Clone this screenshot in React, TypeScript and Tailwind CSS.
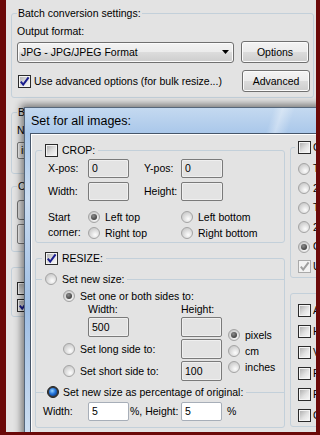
import clsx from 'clsx';
import type { ReactNode } from 'react';

function Check({ checked = false, disabled = false }: { checked?: boolean; disabled?: boolean }) {
  return (
    <span
      className={clsx(
        'flex h-[13px] w-[13px] shrink-0 items-center justify-center border',
        disabled
          ? 'border-[#a9a9a9] bg-[#f3f3f3]'
          : 'border-[#2a2a2a] bg-[linear-gradient(135deg,#a8a8a8_0%,#e2e2e2_55%,#fbfbfb_100%)] shadow-[inset_0_0_0_1px_#f4f4f4]',
      )}
    >
      {checked && (
        <svg width="11" height="11" viewBox="0 0 11 11">
          <path
            d="M1.8 5.6 L4.2 8.6 L9.6 1.4"
            fill="none"
            stroke={disabled ? '#a0a0a0' : '#1b1e8e'}
            strokeWidth="2"
          />
        </svg>
      )}
    </span>
  );
}

function Radio({ checked = false, blue = false }: { checked?: boolean; blue?: boolean }) {
  return (
    <span
      className={clsx(
        'flex h-[12px] w-[12px] shrink-0 items-center justify-center rounded-full border',
        blue
          ? 'border-[#262626] bg-[#3a3a3a]'
          : 'border-[#a4a4a4] bg-[radial-gradient(circle_at_62%_68%,#fdfdfd_0%,#dfdfdf_45%,#bcbcbc_100%)]',
      )}
    >
      {checked &&
        (blue ? (
          <span className="h-[8px] w-[8px] rounded-full bg-[radial-gradient(circle_at_40%_35%,#9ad6ff_0%,#2274dc_45%,#06245e_100%)]" />
        ) : (
          <span className="h-[6px] w-[6px] rounded-full bg-[radial-gradient(circle_at_40%_35%,#8c8c8c,#262626)]" />
        ))}
    </span>
  );
}

function RadioLabel({
  checked,
  blue,
  children,
}: {
  checked?: boolean;
  blue?: boolean;
  children: ReactNode;
}) {
  return (
    <span className="flex items-center gap-[5px] whitespace-nowrap">
      <Radio checked={checked} blue={blue} />
      {children}
    </span>
  );
}

function Field({
  value = '',
  white = false,
  className,
}: {
  value?: string;
  white?: boolean;
  className: string;
}) {
  return (
    <span
      className={clsx(
        'flex shrink-0 items-center rounded-[2px] border pl-[3px]',
        white
          ? 'border-[#a7aeb8] bg-white'
          : 'border-[#7a7a7a] bg-[#e3e3e3] shadow-[inset_0_0_0_1px_#efefef]',
        className,
      )}
    >
      {value}
    </span>
  );
}

function WinButton({ children }: { children: ReactNode }) {
  return (
    <button
      type="button"
      className="h-[22px] w-[68px] shrink-0 rounded-[3px] border border-[#707070] bg-[linear-gradient(#f3f3f3_0%,#ebebeb_50%,#dcdcdc_50%,#cdcdcd_100%)] text-center shadow-[inset_0_0_0_1px_#fbfbfb]"
    >
      {children}
    </button>
  );
}

function BatchSettings() {
  return (
    <fieldset className="ml-[5px] mr-[2px] mt-[6px] min-w-0 rounded-[3px] border border-[#c3d0da] pb-[5px] pl-[5px] pr-[3px]">
      <legend className="px-[1px]">Batch conversion settings:</legend>
      <div className="mt-[3px]">Output format:</div>
      <div className="mt-[2px] flex h-[22px] items-center gap-[7px]">
        <div className="flex h-[21px] w-[217px] items-center justify-between rounded-[3px] border border-[#707070] bg-[linear-gradient(#f3f3f3_0%,#ebebeb_50%,#dcdcdc_50%,#cdcdcd_100%)] pl-[3px] pr-[4px] shadow-[inset_0_0_0_1px_#fbfbfb]">
          <span>JPG - JPG/JPEG Format</span>
          <svg width="7" height="4" viewBox="0 0 7 4">
            <polygon points="0,0 7,0 3.5,4" fill="#000" />
          </svg>
        </div>
        <WinButton>Options</WinButton>
      </div>
      <div className="mt-[7px] flex h-[22px] items-center">
        <span className="ml-[1px]">
          <Check checked />
        </span>
        <span className="ml-[3px] whitespace-nowrap">Use advanced options (for bulk resize...)</span>
        <span className="ml-auto">
          <WinButton>Advanced</WinButton>
        </span>
      </div>
    </fieldset>
  );
}

function BackGroups() {
  return (
    <div className="ml-[5px] flex w-[150px] flex-col">
      <fieldset className="mt-[7px] min-w-0 rounded-[3px] border border-[#c3d0da] pb-[14px] pl-[5px]">
        <legend className="px-[1px]">Batch rename</legend>
        <div className="mt-[3px]">Name pattern:</div>
        <Field value="image###" className="mt-[4px] h-[17px] w-[120px]" />
      </fieldset>
      <fieldset className="mt-[5px] min-w-0 rounded-[3px] border border-[#c3d0da] pb-[7px] pl-[5px]">
        <legend className="px-[1px]">Output folder:</legend>
        <div className="mt-[6px] h-[20px] w-[120px] rounded-[3px] border border-[#707070] bg-[#dcdcdc]" />
        <Field className="mt-[4px] h-[20px] w-[120px]" />
      </fieldset>
      <fieldset className="mt-[15px] min-w-0 rounded-[3px] border border-[#c3d0da] pb-[4px] pl-[5px] pt-[14px]">
        <div className="flex h-[13px] items-center gap-[4px]">
          <Check /> Overwrite
        </div>
        <div className="mt-[4px] flex h-[13px] items-center gap-[4px]">
          <Check checked /> Open folder
        </div>
      </fieldset>
    </div>
  );
}

function CropGroup() {
  return (
    <fieldset className="min-w-0 rounded-[3px] border border-[#c3d0da] pb-[1px] pl-[12px]">
      <legend className="-ml-[6px] px-[3px]">
        <span className="flex h-[14px] items-center gap-[4px]">
          <Check /> CROP:
        </span>
      </legend>
      <div className="mt-[2px] flex h-[19px] items-center whitespace-nowrap">
        <span className="w-[40px]">X-pos:</span>
        <Field value="0" className="h-[19px] w-[41px]" />
        <span className="ml-[15px] w-[37px]">Y-pos:</span>
        <Field value="0" className="h-[19px] w-[42px]" />
      </div>
      <div className="mt-[4px] flex h-[19px] items-center whitespace-nowrap">
        <span className="w-[40px]">Width:</span>
        <Field className="h-[19px] w-[41px]" />
        <span className="ml-[15px] w-[37px]">Height:</span>
        <Field className="h-[19px] w-[42px]" />
      </div>
      <div className="mt-[8px] flex">
        <div className="w-[40px] pt-[1px]">
          <div>Start</div>
          <div>corner:</div>
        </div>
        <div className="grid grid-cols-[93px_auto] grid-rows-[16px_16px] items-center">
          <RadioLabel checked>Left top</RadioLabel>
          <RadioLabel>Left bottom</RadioLabel>
          <RadioLabel>Right top</RadioLabel>
          <RadioLabel>Right bottom</RadioLabel>
        </div>
      </div>
    </fieldset>
  );
}

function ResizeGroup() {
  return (
    <fieldset className="mt-[8px] min-w-0 rounded-[3px] border border-[#c3d0da] pb-[6px]">
      <legend className="ml-[6px] px-[3px]">
        <span className="flex h-[14px] items-center gap-[4px]">
          <Check checked /> RESIZE:
        </span>
      </legend>

      <fieldset className="mt-[7px] min-w-0 border-t border-[#c3d0da]">
        <legend className="ml-[6px] px-[3px]">
          <span className="flex h-[14px] items-center">
            <RadioLabel>Set new size:</RadioLabel>
          </span>
        </legend>
        <div className="pl-[27px]">
          <div className="mt-[3px] flex h-[14px] items-center">
            <RadioLabel checked>Set one or both sides to:</RadioLabel>
          </div>
          <div className="flex h-[12px] items-center leading-[12px]">
            <span className="ml-[25px] w-[93px]">Width:</span>
            <span>Height:</span>
          </div>
          <div className="mt-[2px] flex">
            <div className="flex w-[118px] flex-col gap-[2px]">
              <div className="flex h-[20px] items-center pl-[25px]">
                <Field value="500" className="h-[20px] w-[41px]" />
              </div>
              <div className="flex h-[20px] items-center">
                <RadioLabel>Set long side to:</RadioLabel>
              </div>
              <div className="flex h-[20px] items-center">
                <RadioLabel>Set short side to:</RadioLabel>
              </div>
            </div>
            <div className="flex w-[47px] flex-col gap-[2px]">
              <Field className="h-[20px] w-[41px]" />
              <Field className="h-[20px] w-[41px]" />
              <Field value="100" className="h-[20px] w-[41px]" />
            </div>
            <div className="mt-[10px] flex flex-col">
              <div className="flex h-[16px] items-center">
                <RadioLabel checked>pixels</RadioLabel>
              </div>
              <div className="flex h-[16px] items-center">
                <RadioLabel>cm</RadioLabel>
              </div>
              <div className="flex h-[16px] items-center">
                <RadioLabel>inches</RadioLabel>
              </div>
            </div>
          </div>
        </div>
      </fieldset>

      <fieldset className="mt-[4px] min-w-0 border-t border-[#c3d0da]">
        <legend className="ml-[8px] px-[3px]">
          <span className="flex h-[14px] items-center gap-[4px] whitespace-nowrap">
            <Radio checked blue />
            Set new size as percentage of original:
          </span>
        </legend>
        <div className="mt-[3px] flex h-[19px] items-center whitespace-nowrap pl-[7px]">
          <span className="w-[45px]">Width:</span>
          <Field white value="5" className="h-[19px] w-[41px]" />
          <span className="w-[52px] pl-[1px]">%, Height:</span>
          <Field white value="5" className="h-[19px] w-[41px]" />
          <span className="ml-[5px]">%</span>
        </div>
      </fieldset>
    </fieldset>
  );
}

function RightColumn() {
  const colors = ['True color', '256 colors', 'Two colors', '24 bit', 'Original'];
  const effects = ['Auto rotate', 'Horizontal flip', 'Vertical flip', 'Fill canvas', 'Frame', 'Canvas size'];
  return (
    <div className="flex w-[60px] shrink-0 flex-col">
      <fieldset className="min-w-0 rounded-[3px] border border-[#c3d0da] pb-[1px] pl-[7px]">
        <legend className="-ml-[3px] px-[3px]">
          <span className="flex h-[14px] items-center gap-[2px] whitespace-nowrap">
            <Check /> Color depth:
          </span>
        </legend>
        <div className="mt-[5px] flex flex-col">
          {colors.map((c, i) => (
            <div key={c} className="flex h-[19.5px] items-center gap-[3px] whitespace-nowrap">
              <Radio checked={i === 4} />
              {c}
            </div>
          ))}
          <div className="flex h-[19.5px] items-center gap-[2px] whitespace-nowrap">
            <Check checked disabled />
            Use dithering
          </div>
        </div>
      </fieldset>
      <fieldset className="mt-[15px] min-w-0 rounded-[3px] border border-[#c3d0da] pl-[7px] pt-[6px]">
        {effects.map((e) => (
          <div key={e} className="flex h-[21px] items-center gap-[2px] whitespace-nowrap">
            <Check />
            {e}
          </div>
        ))}
      </fieldset>
    </div>
  );
}

function Dialog() {
  return (
    <div className="absolute left-[18px] top-[107px] flex h-[340px] w-[300px] flex-col border-l border-t border-[#56677b] bg-[linear-gradient(180deg,#c4d9f0_0px,#a9c7ea_26px,#cadcf0_90px,#9dbde3_200px,#cbddf1_320px)] shadow-[0_0_7px_3px_rgba(0,0,0,0.45)]">
      <div className="h-[25px] bg-[linear-gradient(108deg,transparent_0%,transparent_81%,rgba(255,255,255,0.35)_84%,transparent_88%)] pl-[6px] pt-[5px] text-[12.5px] leading-[17px]">
        Set for all images:
      </div>
      <div className="ml-[5px] flex flex-1 items-start gap-[5px] border-l border-t border-[#46566a] bg-[#e3e3e3] pl-[4px] pt-[6px] shadow-[inset_1px_1px_0_#ffffff]">
        <div className="mt-[3px] flex w-[250px] shrink-0 flex-col">
          <CropGroup />
          <ResizeGroup />
        </div>
        <RightColumn />
      </div>
    </div>
  );
}

export default function App() {
  return (
    <div className="h-[435px] w-[320px] overflow-hidden bg-[#6b0909] pb-[3px] pl-[6px] pr-[4px] text-[10.5px] leading-[15px] text-black [font-family:'Liberation_Sans',Arial,sans-serif]">
      <div className="relative h-[432px] w-[310px] overflow-hidden bg-[#e3e3e3]">
        <BatchSettings />
        <BackGroups />
        <Dialog />
      </div>
    </div>
  );
}
